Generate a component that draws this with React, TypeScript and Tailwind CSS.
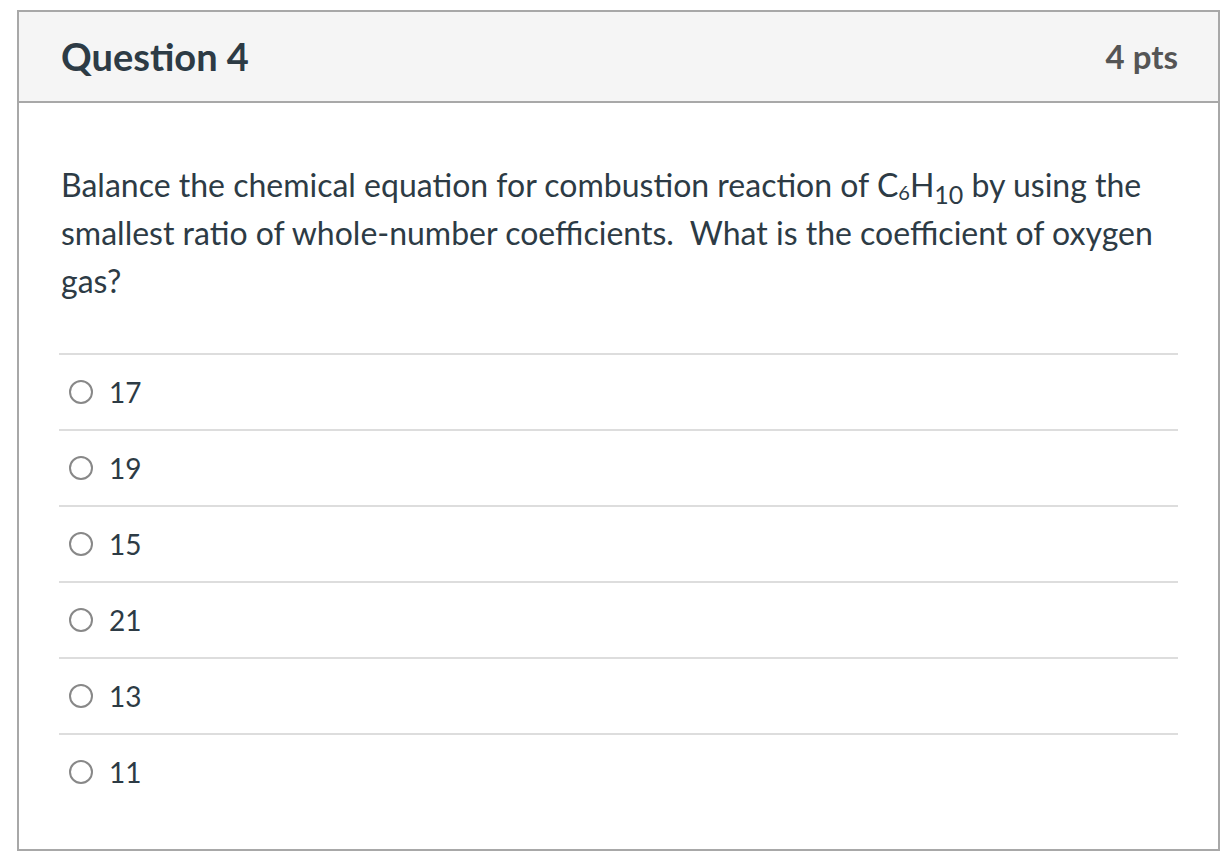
const options = ["17", "19", "15", "21", "13", "11"];

export default function App() {
  return (
    <div className="min-h-screen bg-white pt-[10px] pl-[17px] pr-[1px] font-['Lato','Liberation_Sans',sans-serif] text-[#2d3b45]">
      <div className="h-[841px] border-2 border-[#a8a8a8]">
        <header className="flex h-[91px] items-center justify-between border-b-2 border-[#a8a8a8] bg-[#f5f5f5] pl-[42px] pr-[40px]">
          <h2 className="text-[38px] font-bold">Question 4</h2>
          <span className="text-[33px] font-bold text-[#555]">4 pts</span>
        </header>
        <div className="px-10 pt-[58px]">
          <p className="pl-[2px] text-[32px] leading-[48px]">
            Balance the chemical equation for combustion reaction of C
            <span className="relative top-[3px] text-[20px] leading-[0]">6</span>H
            <span className="relative top-[7px] text-[25px] leading-[0]">10</span> by using the smallest ratio of whole-number
            coefficients.&nbsp; What is the coefficient of oxygen gas?
          </p>
          <div className="mt-[48px]">
            {options.map((opt) => (
              <div className="flex h-[76px] items-center border-t-2 border-[#dddddd]" key={opt}>
                <span className="ml-[10px] size-[24px] shrink-0 rounded-full border-2 border-[#888]" />
                <span className="ml-[16px] text-[28px]">{opt}</span>
              </div>
            ))}
          </div>
        </div>
      </div>
    </div>
  );
}
